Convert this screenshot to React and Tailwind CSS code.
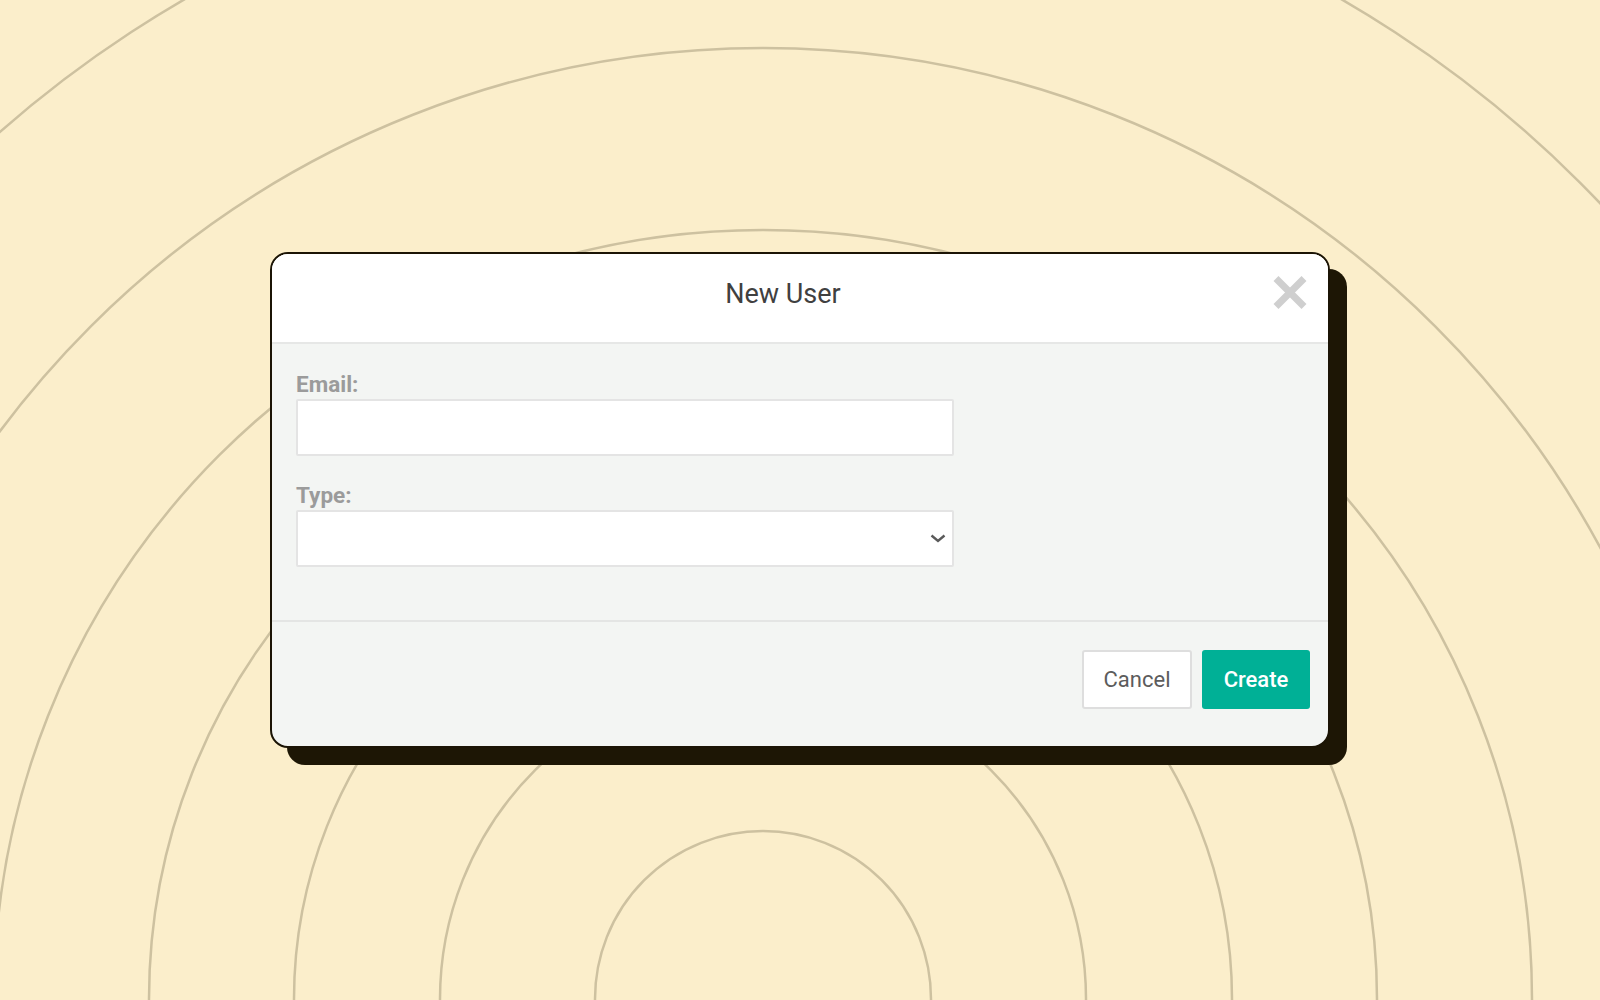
const rings = [168, 323, 469, 614, 769, 951, 1155]

function Rings() {
  return (
    <svg className="absolute inset-0 h-full w-full" viewBox="0 0 1600 1000" preserveAspectRatio="none">
      {rings.map((r) => (
        <circle key={r} cx="763" cy="999" r={r} fill="none" stroke="#cdc1a0" strokeWidth="2.5" />
      ))}
    </svg>
  )
}

function Field({ label, children }) {
  return (
    <div className="flex flex-col">
      <label className="mb-[2px] text-[22.5px] font-bold leading-[26px] text-[#9b9b9b]">{label}</label>
      {children}
    </div>
  )
}

function App() {
  return (
    <main
      className="relative flex h-screen w-full items-center justify-center overflow-hidden bg-[#fbeecb]"
      style={{ fontFamily: 'Roboto, "Liberation Sans", sans-serif' }}
    >
      <Rings />
      <div className="relative w-[1060px] overflow-hidden rounded-[18px] border-2 border-[#1b1405] bg-[#f3f5f3] shadow-[17px_17px_0_0_#1d1605]">
        <header className="relative flex h-[90px] items-center justify-center border-b-2 border-[#e6e7e6] bg-white pb-2 pr-[34px]">
          <h2 className="text-[27px] leading-none text-[#404040]">New User</h2>
          <button className="absolute right-[21px] top-[21px] h-[35px] w-[34px]">
            <svg viewBox="0 0 34 35" className="h-[35px] w-[34px]">
              <path d="M3 3.5 L31 31.5 M31 3.5 L3 31.5" stroke="#cfcfcf" strokeWidth="7" />
            </svg>
          </button>
        </header>

        <section className="flex flex-col gap-[26px] px-[24px] pb-[53px] pt-[27px]">
          <Field label="Email:">
            <input
              type="text"
              className="h-[57px] w-[658px] rounded-[2px] border-2 border-[#e4e4e4] bg-white px-3 text-[20px] outline-none"
            />
          </Field>
          <Field label="Type:">
            <div className="flex h-[57px] w-[658px] items-center justify-end rounded-[2px] border-2 border-[#e4e4e4] bg-white pr-[6px]">
              <svg viewBox="0 0 16 9" className="h-[9px] w-[16px]">
                <path d="M1.5 1.5 L8 7 L14.5 1.5" fill="none" stroke="#5a5a5a" strokeWidth="2.4" />
              </svg>
            </div>
          </Field>
        </section>

        <footer className="flex justify-end gap-[10px] border-t-2 border-[#e4e5e4] pb-[37px] pr-[18px] pt-[28px]">
          <button className="h-[59px] w-[110px] rounded-[3px] border-2 border-[#dedede] bg-white text-[22px] text-[#5c5c5c]">
            Cancel
          </button>
          <button className="h-[59px] w-[108px] rounded-[3px] bg-[#00b096] text-[22px] font-medium text-white">
            Create
          </button>
        </footer>
      </div>
    </main>
  )
}

export default App
